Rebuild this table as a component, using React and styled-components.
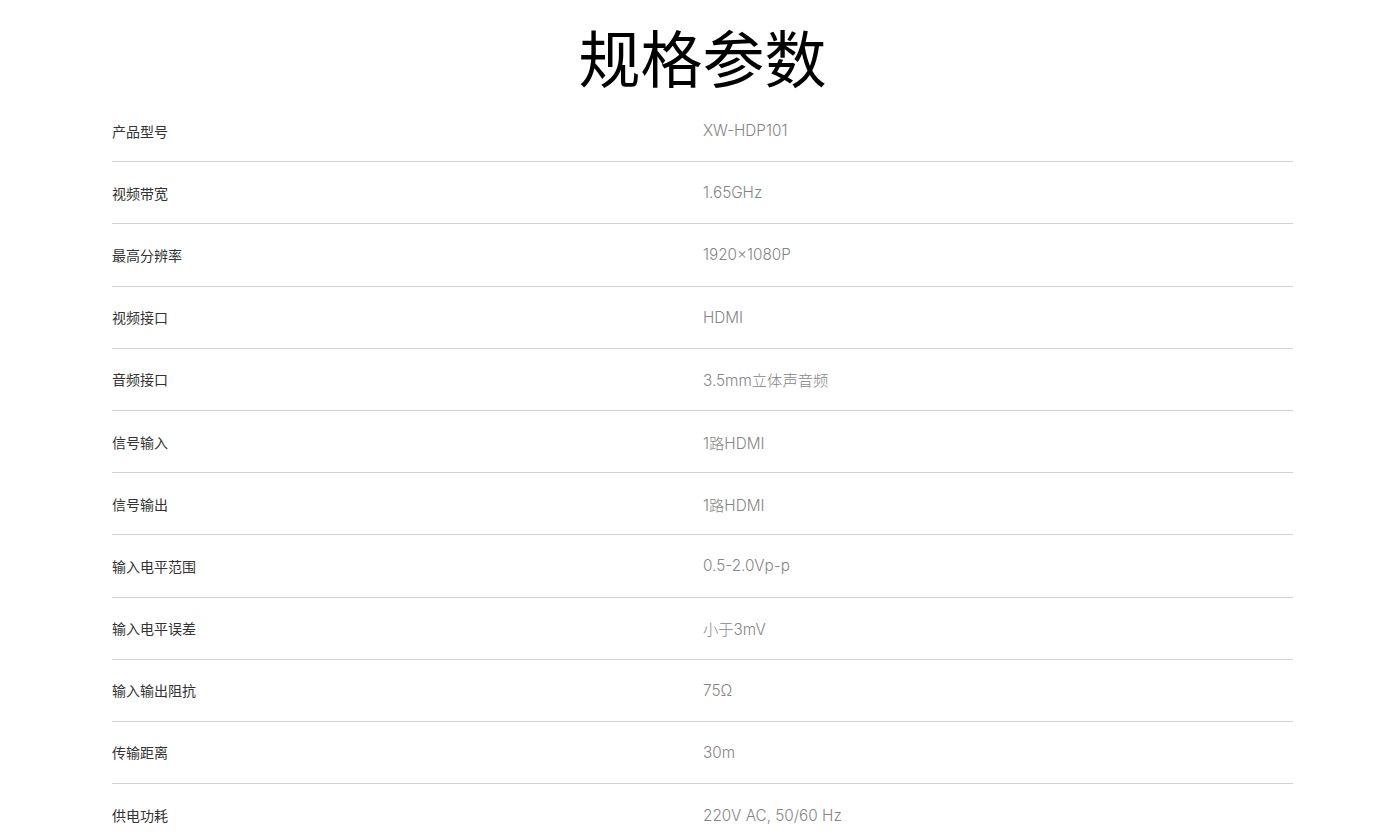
import React from "react";
import styled, { createGlobalStyle } from "styled-components";

const Global = createGlobalStyle`
  html, body { margin: 0; padding: 0; background: #fff; }
  body { font-family: Inter, "Noto Sans CJK SC", sans-serif; }
`;

const Page = styled.div`
  width: 1181px;
  margin-left: 112px;
`;

const Title = styled.h1`
  margin: 0;
  padding-top: 16px;
  height: 100px;
  box-sizing: border-box;
  text-align: center;
  font-family: "Noto Sans CJK SC", sans-serif;
  font-weight: 400;
  font-size: 62px;
  line-height: 80px;
  color: #000;
`;

const Table = styled.div`
  display: flex;
  flex-direction: column;
`;

const Row = styled.div`
  display: grid;
  grid-template-columns: 591px 1fr;
  align-items: center;
  height: 62.2px;
  box-sizing: border-box;
  border-bottom: ${(p) => (p.$last ? "none" : "1px solid #d2d2d2")};
`;

const Label = styled.div`
  font-family: "Noto Sans CJK SC", sans-serif;
  font-size: 14px;
  color: #333;
`;

const Value = styled.div`
  font-family: Inter, "Noto Sans CJK SC", sans-serif;
  font-size: 15.3px;
  color: #858585;
  font-weight: 300;
`;

const specs = [
  ["产品型号", "XW-HDP101"],
  ["视频带宽", "1.65GHz"],
  ["最高分辨率", "1920×1080P"],
  ["视频接口", "HDMI"],
  ["音频接口", "3.5mm立体声音频"],
  ["信号输入", "1路HDMI"],
  ["信号输出", "1路HDMI"],
  ["输入电平范围", "0.5-2.0Vp-p"],
  ["输入电平误差", "小于3mV"],
  ["输入输出阻抗", "75Ω"],
  ["传输距离", "30m"],
  ["供电功耗", "220V AC, 50/60 Hz"],
];

export default function App() {
  return (
    <>
      <Global />
      <Page>
        <Title>规格参数</Title>
        <Table>
          {specs.map(([k, v], i) => (
            <Row key={k} $last={i === specs.length - 1}>
              <Label>{k}</Label>
              <Value>{v}</Value>
            </Row>
          ))}
        </Table>
      </Page>
    </>
  );
}
